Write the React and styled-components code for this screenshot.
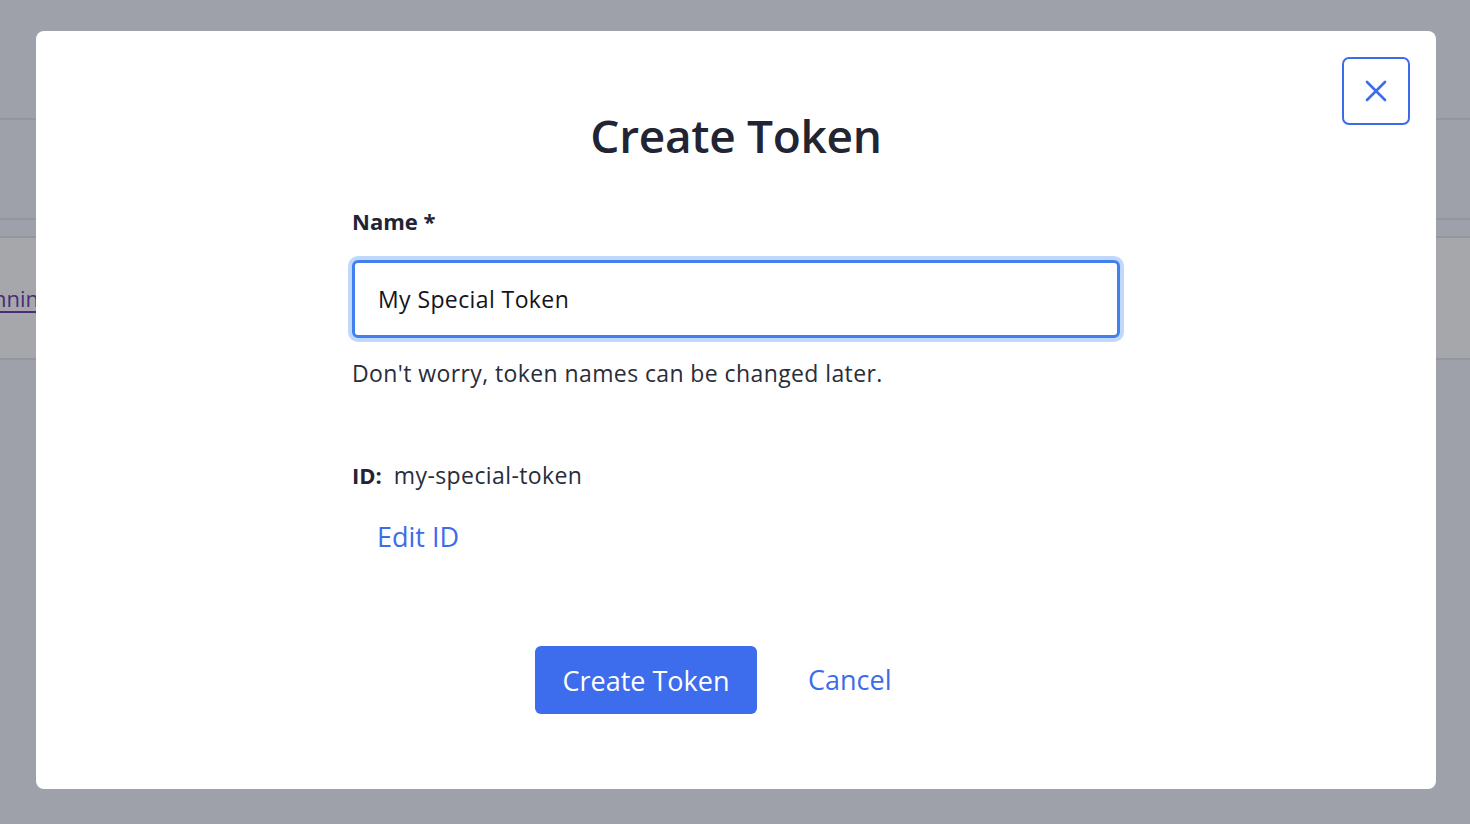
import React, { useState } from 'react';
import styled, { createGlobalStyle } from 'styled-components';

const GlobalStyle = createGlobalStyle`
    html, body {
        margin: 0;
        padding: 0;
        height: 100%;
    }
    body {
        font-family: "Open Sans", Lato, "Liberation Sans", sans-serif;
        background: rgb(158, 161, 169);
        overflow: hidden;
    }
    * {
        box-sizing: border-box;
    }
`

const Page = styled.div`
    width: 1470px;
    height: 824px;
    position: relative;
    overflow: hidden;
`
const PageRow = styled.div`
    height: ${({ h }) => h}px;
    border-bottom: 2px solid rgb(148, 150, 158);
    background: ${({ light }) => light ? 'rgb(166, 167, 171)' : 'rgb(158, 161, 169)'};
    display: flex;
    align-items: center;
`
const BackLink = styled.a`
    margin-left: -34px;
    font-size: 22px;
    color: rgb(74, 44, 120);
    text-decoration: underline;
    text-underline-offset: 4px;
`

const Modal = styled.div`
    position: absolute;
    left: 36px;
    top: 31px;
    width: 1400px;
    height: 758px;
    background: #fff;
    border-radius: 8px;
    display: flex;
    flex-direction: column;
    align-items: center;
    padding-top: 72px;
`
const CloseBtn = styled.button`
    position: absolute;
    top: 26px;
    right: 26px;
    width: 68px;
    height: 68px;
    border: 2px solid rgb(61, 108, 234);
    border-radius: 7px;
    background: #fff;
    display: flex;
    align-items: center;
    justify-content: center;
    padding: 0;
    cursor: pointer;
`
const Title = styled.h1`
    margin: 0;
    font-size: 46px;
    font-weight: 600;
    color: rgb(34, 36, 52);
    line-height: 64px;
    letter-spacing: -0.3px;
`
const Form = styled.div`
    width: 768px;
    margin-top: 39px;
    display: flex;
    flex-direction: column;
`
const Label = styled.label`
    font-size: 22px;
    font-weight: 700;
    color: rgb(34, 36, 52);
    line-height: 30px;
`
const Input = styled.input`
    margin-top: 24px;
    height: 78px;
    width: 100%;
    border: 3px solid rgb(66, 128, 240);
    border-radius: 6px;
    box-shadow: 0 0 0 4px rgba(74, 144, 245, 0.35);
    padding: 0 23px;
    font-family: inherit;
    font-size: 23px;
    letter-spacing: 0.4px;
    color: rgb(20, 20, 28);
    outline: none;
    background: #fff;
    caret-color: rgb(20, 20, 28);
`
const Hint = styled.p`
    margin: 20px 0 0;
    font-size: 23px;
    letter-spacing: 0.4px;
    color: rgb(42, 45, 58);
    line-height: 30px;
`
const IdRow = styled.div`
    margin-top: 72px;
    display: flex;
    align-items: baseline;
    gap: 12px;
    font-size: 23px;
    letter-spacing: 0.4px;
    line-height: 30px;
    color: rgb(42, 45, 58);
`
const IdKey = styled.span`
    font-weight: 700;
    font-size: 22px;
    letter-spacing: 0;
    color: rgb(34, 36, 52);
`
const LinkBtn = styled.button`
    border: none;
    background: none;
    padding: 0;
    font-family: inherit;
    font-size: 27px;
    color: rgb(61, 108, 234);
    cursor: pointer;
    line-height: 34px;
`
const EditRow = styled.div`
    margin-top: 30px;
    padding-left: 25px;
`
const Actions = styled.div`
    margin-top: 92px;
    padding-left: 183px;
    display: flex;
    align-items: center;
    gap: 51px;
`
const PrimaryBtn = styled.button`
    width: 222px;
    height: 68px;
    border: none;
    border-radius: 6px;
    background: rgb(61, 108, 236);
    color: #fff;
    font-family: inherit;
    font-size: 27px;
    cursor: pointer;
`

const App = () => {
    const [name, setName] = useState('My Special Token');
    const id = name.trim().toLowerCase().replace(/\s+/g, '-');

    return <React.Fragment>
        <GlobalStyle />
        <Page>
            <PageRow h={120} />
            <PageRow h={100} />
            <PageRow h={18} />
            <PageRow h={122} light>
                <BackLink>Running</BackLink>
            </PageRow>

            <Modal>
                <CloseBtn aria-label="Close">
                    <svg width="22" height="22" viewBox="0 0 22 22" fill="none">
                        <path d="M2 2L20 20M20 2L2 20" stroke="rgb(61, 108, 234)" strokeWidth="2.6" strokeLinecap="round" />
                    </svg>
                </CloseBtn>
                <Title>Create Token</Title>
                <Form>
                    <Label>Name *</Label>
                    <Input value={name} onChange={e => setName(e.target.value)} autoFocus />
                    <Hint>Don't worry, token names can be changed later.</Hint>
                    <IdRow>
                        <IdKey>ID:</IdKey>
                        <span>{id}</span>
                    </IdRow>
                    <EditRow>
                        <LinkBtn>Edit ID</LinkBtn>
                    </EditRow>
                    <Actions>
                        <PrimaryBtn>Create Token</PrimaryBtn>
                        <LinkBtn>Cancel</LinkBtn>
                    </Actions>
                </Form>
            </Modal>
        </Page>
    </React.Fragment>
}

export default App;
